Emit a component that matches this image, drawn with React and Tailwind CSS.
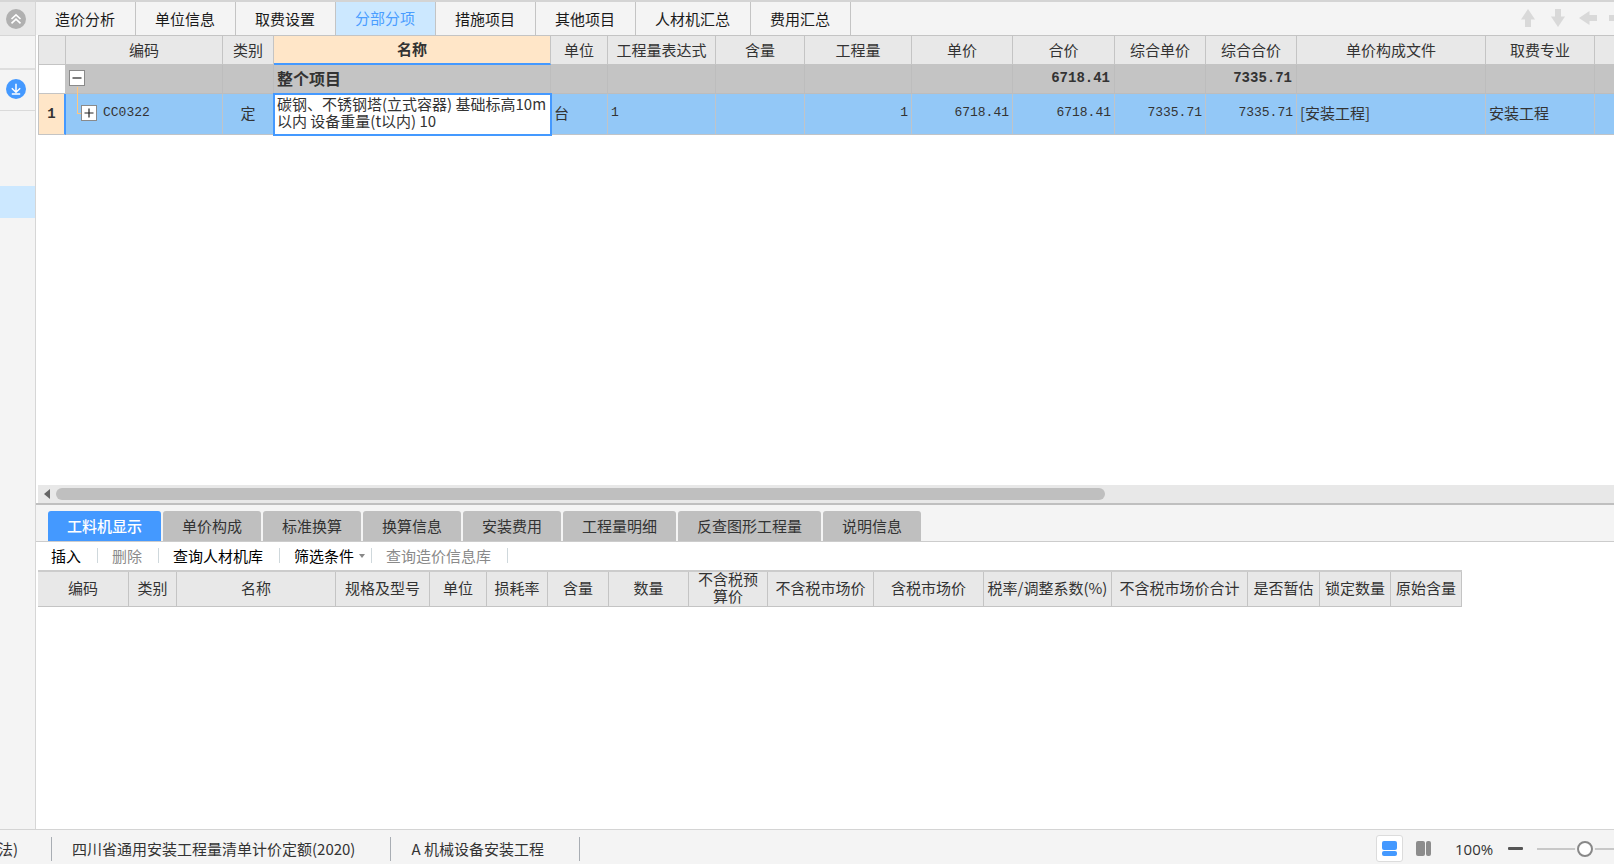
import React from "react";

const mainTabs = ["造价分析", "单位信息", "取费设置", "分部分项", "措施项目", "其他项目", "人材机汇总", "费用汇总"];
const detailTabs = ["工料机显示", "单价构成", "标准换算", "换算信息", "安装费用", "工程量明细", "反查图形工程量", "说明信息"];

const columns = [
  { w: "w-[27px]", label: "" },
  { w: "w-[157px]", label: "编码" },
  { w: "w-[51px]", label: "类别" },
  { w: "w-[277px]", label: "名称", active: true },
  { w: "w-[57px]", label: "单位" },
  { w: "w-[108px]", label: "工程量表达式" },
  { w: "w-[89px]", label: "含量" },
  { w: "w-[107px]", label: "工程量" },
  { w: "w-[101px]", label: "单价" },
  { w: "w-[102px]", label: "合价" },
  { w: "w-[91px]", label: "综合单价" },
  { w: "w-[91px]", label: "综合合价" },
  { w: "w-[189px]", label: "单价构成文件" },
  { w: "w-[109px]", label: "取费专业" },
  { w: "", label: "" },
];

const detailColumns = [
  { w: "w-[91px]", label: "编码" },
  { w: "w-[48px]", label: "类别" },
  { w: "w-[159px]", label: "名称" },
  { w: "w-[94px]", label: "规格及型号" },
  { w: "w-[57px]", label: "单位" },
  { w: "w-[61px]", label: "损耗率" },
  { w: "w-[61px]", label: "含量" },
  { w: "w-[80px]", label: "数量" },
  { w: "w-[79px]", label: "不含税预算价" },
  { w: "w-[106px]", label: "不含税市场价" },
  { w: "w-[110px]", label: "含税市场价" },
  { w: "w-[128px]", label: "税率/调整系数(%)" },
  { w: "w-[136px]", label: "不含税市场价合计" },
  { w: "w-[72px]", label: "是否暂估" },
  { w: "w-[71px]", label: "锁定数量" },
  { w: "w-[71px]", label: "原始含量" },
];

const arrowTurns = [
  { name: "上移", cls: "" },
  { name: "下移", cls: "rotate-180" },
  { name: "左移", cls: "-rotate-90" },
  { name: "右移", cls: "rotate-90" },
];

const mono = "font-['Liberation_Mono','Noto_Sans_CJK_SC',monospace]";

function Toggle({ open, label }) {
  return (
    <button aria-label={label} className="relative z-10 flex size-4 shrink-0 items-center justify-center border border-[#8a8a8a] bg-white">
      <svg width="10" height="10" viewBox="0 0 10 10" stroke="#222" strokeWidth="1.2" fill="none">
        <path d={open ? "M0.5 5H9.5" : "M0.5 5H9.5M5 0.5V9.5"} />
      </svg>
    </button>
  );
}

function Sidebar() {
  return (
    <aside className="flex w-9 shrink-0 flex-col border-r border-[#d6d6d6] bg-[#f4f4f4]">
      <div className="flex h-9 items-center border-t-2 border-b border-[#d6d6d6] bg-[#e8e8e8] pl-[6px]">
        <button aria-label="收起">
          <svg width="20" height="20" viewBox="0 0 20 20" fill="none">
            <circle cx="10" cy="10" r="10" fill="#b0b0b0" />
            <path d="M5.5 10L10 5.8L14.5 10M5.5 14.4L10 10.2L14.5 14.4" stroke="#fff" strokeWidth="1.6" />
          </svg>
        </button>
      </div>
      <div className="h-[34px] border-b-2 border-[#dedede]" />
      <div className="flex h-[41px] items-center border-b border-[#dadada] pb-[2px] pl-[6px]">
        <button aria-label="下载">
          <svg width="20" height="20" viewBox="0 0 20 20" fill="none">
            <circle cx="10" cy="10" r="10" fill="#4499ff" />
            <path d="M10 4.8V13M5.8 9.2L10 13.2L14.2 9.2M5.8 15H14.2" stroke="#fff" strokeWidth="1.5" />
          </svg>
        </button>
      </div>
      <div className="mt-[75px] h-8 bg-[#cce8ff]" />
    </aside>
  );
}

function MainTabs() {
  return (
    <div className="flex h-[35px] shrink-0 items-stretch border-t-2 border-[#d4d4d4] bg-[#f4f4f4]">
      <div role="tablist" className="flex">
        {mainTabs.map((t) => {
          const on = t === "分部分项";
          return (
            <button
              key={t}
              role="tab"
              aria-selected={on}
              className={
                "border-r border-[#c4c4c4] pl-[19px] pr-5 whitespace-nowrap " +
                (on ? "bg-[#cce8ff] pb-[2px] text-[#4a9dff]" : "text-[#1a1a1a]")
              }
            >
              {t}
            </button>
          );
        })}
      </div>
      <div className="-mr-[14px] ml-auto flex shrink-0 items-center gap-[10px] pb-[2px]">
        {arrowTurns.map((a) => (
          <button key={a.name} aria-label={a.name}>
            <svg width="20" height="20" viewBox="0 0 20 20" className={a.cls}>
              <path d="M10 1L17 11.5H13V19H7V11.5H3Z" fill="#d9d9d9" />
            </svg>
          </button>
        ))}
      </div>
    </div>
  );
}

function MainTable() {
  const g = "border-r border-b border-[#bdbdbd] bg-[#c4c4c4] px-[3px] pt-0 pb-[2px]";
  const s = "border-r border-b border-[#c0c4c8] bg-[#93c8f7] px-[3px] pt-0 pb-[3px]";
  const num = " text-right text-[13px] " + mono;
  const bold = " pr-[4px] text-right text-[14px] font-bold " + mono;
  return (
    <table className="w-[calc(100%+1px)] table-fixed border-separate border-spacing-0 border-t border-l border-[#c4c4c4] leading-[17px] whitespace-nowrap text-[#333]">
      <thead>
        <tr className="h-[29px]">
          {columns.map((c, i) => (
            <th
              key={i}
              className={
                c.w +
                (c.active
                  ? " border-r border-b-2 border-r-[#c4c4c4] border-b-[#4499ff] bg-[#ffe6c8] px-0 pt-0 pb-[2px] font-bold"
                  : " border-r border-b border-[#c4c4c4] bg-[#e8e8e8] px-0 pt-0 pb-[2px] font-normal")
              }
            >
              {c.label}
            </th>
          ))}
        </tr>
      </thead>
      <tbody>
        <tr className="h-[29px]">
          <td className="border-r border-b border-[#c4c4c4] bg-white" />
          <td className={g}><Toggle open label="折叠" /></td>
          <td className={g} />
          <td className={g + " text-base font-bold"}>整个项目</td>
          <td className={g} />
          <td className={g} />
          <td className={g} />
          <td className={g} />
          <td className={g} />
          <td className={g + bold}>6718.41</td>
          <td className={g} />
          <td className={g + bold}>7335.71</td>
          <td className={g} />
          <td className={g} />
          <td className={g} />
        </tr>
        <tr className="h-[41px]">
          <td className={"border-r-2 border-b border-r-[#4499ff] border-b-[#c4c4c4] bg-[#ffe6c8] p-0 text-center text-[14px] font-bold " + mono}>1</td>
          <td className={s + " relative"}>
            <span className="absolute -top-[7px] left-[11px] h-[27px] w-2 border-b border-l border-[#ffc77f]" />
            <div className="flex items-center gap-[6px] pl-3">
              <Toggle label="展开" />
              <span className={"text-[13px] " + mono}>CC0322</span>
            </div>
          </td>
          <td className={s + " text-center"}>定</td>
          <td className="relative bg-white px-[3px] pt-0 pb-[5px] whitespace-normal outline-2 -outline-offset-1 outline-[#4499ff]">
            碳钢、不锈钢塔(立式容器) 基础标高10m以内 设备重量(t以内) 10
          </td>
          <td className={s}>台</td>
          <td className={s + " text-[13px] " + mono}>1</td>
          <td className={s} />
          <td className={s + num}>1</td>
          <td className={s + num}>6718.41</td>
          <td className={s + num}>6718.41</td>
          <td className={s + num}>7335.71</td>
          <td className={s + num}>7335.71</td>
          <td className={s}>[安装工程]</td>
          <td className={s}>安装工程</td>
          <td className={s} />
        </tr>
      </tbody>
    </table>
  );
}

function ToolItem({ children, muted, menu }) {
  return (
    <button
      className={
        "flex items-center whitespace-nowrap " +
        (menu ? "pr-[6px] pl-[14px] " : "pr-4 pl-[14px] ") +
        (muted ? "text-[#8a8a8a]" : "text-black")
      }
    >
      {children}
      {menu && (
        <svg width="6" height="4" viewBox="0 0 6 4" className="ml-[5px]">
          <path d="M0 0H6L3 4Z" fill="#888" />
        </svg>
      )}
    </button>
  );
}

function Divider() {
  return <span className="h-[15px] w-px bg-[#cfd8dc]" />;
}

function DetailPanel() {
  return (
    <section className="flex min-h-0 grow-[325] basis-0 flex-col">
      <div role="tablist" className="flex h-[37px] shrink-0 items-end gap-[2px] border-b border-[#cccccc] bg-[#f4f4f4] pl-3">
        {detailTabs.map((t, i) => (
          <button
            key={t}
            role="tab"
            aria-selected={i === 0}
            className={
              "h-[30px] rounded-t-[3px] px-[19px] whitespace-nowrap " +
              (i === 0 ? "bg-[#4499ff] font-medium text-white" : "bg-[#bfbfbf] text-[#333]")
            }
          >
            {t}
          </button>
        ))}
      </div>
      <div className="flex h-7 shrink-0 items-center pl-px">
        <ToolItem>插入</ToolItem>
        <Divider />
        <ToolItem muted>删除</ToolItem>
        <Divider />
        <ToolItem>查询人材机库</ToolItem>
        <Divider />
        <ToolItem menu>筛选条件</ToolItem>
        <Divider />
        <ToolItem muted>查询造价信息库</ToolItem>
        <Divider />
      </div>
      <div className="min-h-0 flex-1 overflow-hidden pl-[2px]">
        <table className="table-fixed border-separate border-spacing-0 border-t-2 border-[#cccccc] leading-[17px] text-[#333]">
          <thead>
            <tr className="h-[35px]">
              {detailColumns.map((c) => (
                <th key={c.label} className={c.w + " border-r border-b border-[#c4c4c4] bg-[#e8e8e8] p-0 font-normal"}>
                  <div className={c.label === "不含税预算价" ? "-mt-[3px] px-2" : "-mt-[3px] whitespace-nowrap"}>{c.label}</div>
                </th>
              ))}
            </tr>
          </thead>
        </table>
      </div>
    </section>
  );
}

function StatusBar() {
  return (
    <footer className="flex h-[35px] shrink-0 items-center overflow-hidden border-t border-[#d4d4d4] bg-[#f4f4f4] pt-[3px] whitespace-nowrap text-[#333]">
      <span className="flex w-[51px] justify-end pr-[33px]">法)</span>
      <span className="h-6 w-px bg-[#a8adb3]" />
      <span className="pr-[35px] pl-5">四川省通用安装工程量清单计价定额(2020)</span>
      <span className="h-6 w-px bg-[#a8adb3]" />
      <span className="pr-[35px] pl-5">A 机械设备安装工程</span>
      <span className="h-6 w-px bg-[#a8adb3]" />
      <div className="-mr-[19px] ml-auto flex shrink-0 items-center">
        <button aria-label="上下布局" className="flex size-[27px] items-center justify-center rounded-[3px] border border-[#dcdcdc] bg-white">
          <svg width="15" height="15" viewBox="0 0 15 15" fill="#4499ff">
            <rect width="15" height="9" rx="2" />
            <rect y="10" width="15" height="5" rx="2" />
          </svg>
        </button>
        <button aria-label="左右布局" className="ml-[13px]">
          <svg width="15" height="15" viewBox="0 0 15 15" fill="#8c8c8c">
            <rect width="9" height="15" rx="2" />
            <rect x="10" width="5" height="15" rx="2" />
          </svg>
        </button>
        <label htmlFor="zoom" className="ml-6 w-[53px] font-['Open_Sans','Noto_Sans',sans-serif]">100%</label>
        <button aria-label="缩小" className="flex h-5 w-[15px] items-center">
          <svg width="15" height="3" viewBox="0 0 15 3"><rect width="15" height="3" rx="1" fill="#555" /></svg>
        </button>
        <input
          id="zoom"
          type="range"
          defaultValue="50"
          className="ml-[14px] h-4 w-24 appearance-none bg-transparent [&::-webkit-slider-runnable-track]:h-[2px] [&::-webkit-slider-runnable-track]:bg-[#c8c8c8] [&::-webkit-slider-thumb]:-mt-[7px] [&::-webkit-slider-thumb]:size-4 [&::-webkit-slider-thumb]:appearance-none [&::-webkit-slider-thumb]:rounded-full [&::-webkit-slider-thumb]:border-2 [&::-webkit-slider-thumb]:border-[#888888] [&::-webkit-slider-thumb]:bg-white [&::-webkit-slider-thumb]:shadow-[0_0_0_2px_#f4f4f4]"
        />
      </div>
    </footer>
  );
}

export default function App() {
  return (
    <div className="flex h-screen flex-col overflow-hidden bg-white font-['Noto_Sans_CJK_SC',sans-serif] text-[15px] leading-5">
      <div className="flex min-h-0 flex-1">
        <Sidebar />
        <main className="flex min-w-0 flex-1 flex-col overflow-hidden">
          <section className="flex min-h-0 grow-[504] basis-0 flex-col border-b-2 border-[#bfbfbf]">
            <MainTabs />
            <div className="min-h-0 flex-1 overflow-hidden pl-[2px]">
              <MainTable />
            </div>
            <div className="ml-[2px] flex h-[18px] shrink-0 items-center bg-[#e8e8e8]">
              <button aria-label="向左滚动" className="flex w-[18px] justify-center">
                <svg width="6" height="10" viewBox="0 0 6 10"><path d="M6 0V10L0 5Z" fill="#666" /></svg>
              </button>
              <div className="flex flex-1">
                <div className="h-3 grow-[1049] basis-0 rounded-full bg-[#bfbfbf]" />
                <div className="grow-[509] basis-0" />
              </div>
            </div>
          </section>
          <DetailPanel />
        </main>
      </div>
      <StatusBar />
    </div>
  );
}
